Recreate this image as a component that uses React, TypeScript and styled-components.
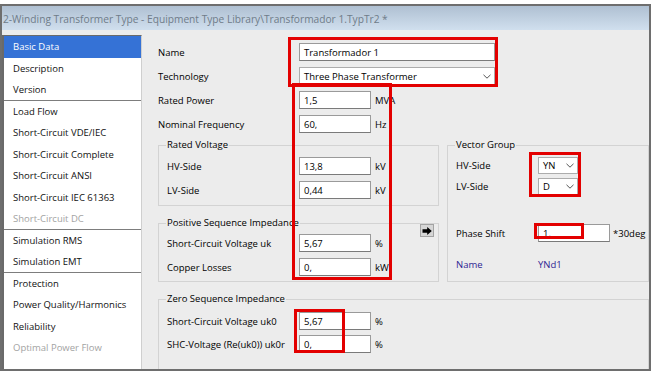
import React from 'react';
import styled, { createGlobalStyle } from 'styled-components';

const GlobalStyle = createGlobalStyle`
  html, body { margin: 0; padding: 0; background: #ffffff; }
  body {
    font-family: "Open Sans", "Noto Sans", sans-serif;
    font-size: 9.5px;
    color: #000;
  }
  * { box-sizing: border-box; }
`;

const Window = styled.div`
  margin-top: 4px;
  width: 651px;
  height: 367px;
  border: 2px solid #6e6e6e;
  display: flex;
  flex-direction: column;
  background: #ececec;
  overflow: hidden;
`;

const TitleBar = styled.div`
  height: 24px;
  flex: none;
  background: linear-gradient(#afc0d2, #d0dfee);
  color: #6f7c89;
  font-size: 10.2px;
  padding: 6px 0 0 1px;
  white-space: nowrap;
  overflow: hidden;
`;

const Body = styled.div`
  flex: 1;
  display: flex;
  min-height: 0;
`;

const Sidebar = styled.div`
  width: 140px;
  flex: none;
  margin-top: 5px;
  background: #fff;
  border-top: 1px solid #6a6a6a;
  border-left: 2px solid #6a6a6a;
  border-right: 1px solid #cfcfcf;
  display: flex;
  flex-direction: column;
`;

const NavItem = styled.div<{ $active?: boolean; $disabled?: boolean; $sep?: boolean }>`
  height: 21.5px;
  flex: none;
  display: flex;
  align-items: center;
  padding-left: 9px;
  white-space: nowrap;
  background: ${(p) => (p.$active ? '#3572d6' : 'transparent')};
  color: ${(p) => (p.$active ? '#fff' : p.$disabled ? '#a3a3a3' : '#111')};
  border-bottom: ${(p) => (p.$sep ? '1px solid #7d7d7d' : '0')};
`;

const Content = styled.div`
  flex: 1;
  position: relative;
  padding: 13px 0 0 16px;
  display: flex;
  flex-direction: column;
  overflow: hidden;
`;

const Stack = styled.div<{ $gap: number }>`
  display: flex;
  flex-direction: column;
  gap: ${(p) => p.$gap}px;
`;

const Row = styled.div<{ $h?: number; $mt?: number }>`
  display: flex;
  align-items: center;
  height: ${(p) => p.$h ?? 18}px;
  margin-top: ${(p) => p.$mt ?? 0}px;
  white-space: nowrap;
`;

const Label = styled.div<{ $w: number; $color?: string }>`
  width: ${(p) => p.$w}px;
  flex: none;
  color: ${(p) => p.$color ?? '#000'};
`;

const Value = styled.div<{ $color?: string }>`
  color: ${(p) => p.$color ?? '#000'};
`;

const Field = styled.div<{ $w: number; $h?: number }>`
  width: ${(p) => p.$w}px;
  height: ${(p) => p.$h ?? 18}px;
  flex: none;
  background: #fff;
  border: 1px solid #9a9a9a;
  border-bottom-color: #7a7a7a;
  padding-left: 4px;
  display: flex;
  align-items: center;
`;

const SelectBox = styled(Field)`
  justify-content: space-between;
  padding-right: 3px;
  border-color: #acacac;
`;

const Unit = styled.span<{ $ml?: number }>`
  margin-left: ${(p) => p.$ml ?? 4}px;
`;

const Middle = styled.div`
  display: flex;
  gap: 8px;
  margin-top: 12px;
`;

const LeftCol = styled.div`
  width: 281px;
  flex: none;
  display: flex;
  flex-direction: column;
  gap: 17px;
`;

const Group = styled.div<{ $pt: number; $pb: number; $gap: number; $mt?: number; $grow?: boolean }>`
  position: relative;
  border: 1px solid #d3d3d3;
  padding: ${(p) => p.$pt}px 0 ${(p) => p.$pb}px 8px;
  margin-top: ${(p) => p.$mt ?? 0}px;
  display: flex;
  flex-direction: column;
  gap: ${(p) => p.$gap}px;
  flex: ${(p) => (p.$grow ? 1 : 'none')};
`;

const Legend = styled.span`
  position: absolute;
  top: -8px;
  left: 7px;
  padding: 0 1px;
  line-height: 14px;
  background: #ececec;
  white-space: nowrap;
`;

const ArrowButton = styled.div`
  position: absolute;
  top: 0;
  right: 4px;
  width: 14px;
  height: 13px;
  background: #d6d6d6;
  border: 1px solid #a3a3a3;
  display: flex;
  align-items: center;
  justify-content: center;
`;

const Marker = styled.div`
  position: absolute;
  border: 3px solid #e30000;
  pointer-events: none;
`;

const Chevron = () => (
  <svg width="8" height="5" viewBox="0 0 8 5">
    <polyline points="0.5,0.8 4,4.2 7.5,0.8" fill="none" stroke="#555" strokeWidth="1" />
  </svg>
);

const navItems: { t: string; active?: boolean; disabled?: boolean; sep?: boolean }[] = [
  { t: 'Basic Data', active: true },
  { t: 'Description' },
  { t: 'Version', sep: true },
  { t: 'Load Flow' },
  { t: 'Short-Circuit VDE/IEC' },
  { t: 'Short-Circuit Complete' },
  { t: 'Short-Circuit ANSI' },
  { t: 'Short-Circuit IEC 61363' },
  { t: 'Short-Circuit DC', disabled: true, sep: true },
  { t: 'Simulation RMS' },
  { t: 'Simulation EMT', sep: true },
  { t: 'Protection' },
  { t: 'Power Quality/Harmonics' },
  { t: 'Reliability' },
  { t: 'Optimal Power Flow', disabled: true },
];

const markers = [
  { l: 146, t: 7, w: 210, h: 50 },
  { l: 150, t: 53, w: 100, h: 197 },
  { l: 152, t: 279, w: 51, h: 44 },
  { l: 387, t: 122, w: 52, h: 45 },
  { l: 392, t: 193, w: 50, h: 16 },
];

const NAME_BLUE = '#2f1f92';

export default function App() {
  return (
    <>
      <GlobalStyle />
      <Window>
        <TitleBar>2-Winding Transformer Type - Equipment Type Library\Transformador 1.TypTr2 *</TitleBar>
        <Body>
          <Sidebar>
            {navItems.map((n) => (
              <NavItem key={n.t} $active={n.active} $disabled={n.disabled} $sep={n.sep}>
                {n.t}
              </NavItem>
            ))}
          </Sidebar>
          <Content>
            <Stack $gap={6}>
              <Row>
                <Label $w={141}>Name</Label>
                <Field $w={196}>Transformador 1</Field>
              </Row>
              <Row>
                <Label $w={141}>Technology</Label>
                <SelectBox $w={196}>
                  <span>Three Phase Transformer</span>
                  <Chevron />
                </SelectBox>
              </Row>
              <Row>
                <Label $w={141}>Rated Power</Label>
                <Field $w={72}>1,5</Field>
                <Unit>MVA</Unit>
              </Row>
              <Row>
                <Label $w={141}>Nominal Frequency</Label>
                <Field $w={72}>60,</Field>
                <Unit>Hz</Unit>
              </Row>
            </Stack>

            <Middle>
              <LeftCol>
                <Group $pt={11} $pb={6} $gap={6}>
                  <Legend>Rated Voltage</Legend>
                  <Row>
                    <Label $w={132}>HV-Side</Label>
                    <Field $w={72}>13,8</Field>
                    <Unit>kV</Unit>
                  </Row>
                  <Row>
                    <Label $w={132}>LV-Side</Label>
                    <Field $w={72}>0,44</Field>
                    <Unit>kV</Unit>
                  </Row>
                </Group>
                <Group $pt={10} $pb={5} $gap={6}>
                  <Legend>Positive Sequence Impedance</Legend>
                  <ArrowButton>
                    <svg width="10" height="8" viewBox="0 0 10 8">
                      <path d="M0.5 2.3 H5.2 V0 L9.8 4 L5.2 8 V5.7 H0.5 Z" fill="#000" />
                    </svg>
                  </ArrowButton>
                  <Row>
                    <Label $w={132}>Short-Circuit Voltage uk</Label>
                    <Field $w={72}>5,67</Field>
                    <Unit>%</Unit>
                  </Row>
                  <Row>
                    <Label $w={132}>Copper Losses</Label>
                    <Field $w={72}>0,</Field>
                    <Unit>kW</Unit>
                  </Row>
                </Group>
              </LeftCol>

              <Group $pt={11} $pb={0} $gap={0} $grow>
                <Legend>Vector Group</Legend>
                <Row $h={17}>
                  <Label $w={82}>HV-Side</Label>
                  <SelectBox $w={40} $h={17}>
                    <span>YN</span>
                    <Chevron />
                  </SelectBox>
                </Row>
                <Row $h={17} $mt={4}>
                  <Label $w={82}>LV-Side</Label>
                  <SelectBox $w={40} $h={17}>
                    <span>D</span>
                    <Chevron />
                  </SelectBox>
                </Row>
                <Row $mt={29}>
                  <Label $w={82}>Phase Shift</Label>
                  <Field $w={72}>1,</Field>
                  <Unit $ml={3}>*30deg</Unit>
                </Row>
                <Row $h={14} $mt={15}>
                  <Label $w={82} $color={NAME_BLUE}>Name</Label>
                  <Value $color={NAME_BLUE}>YNd1</Value>
                </Row>
              </Group>
            </Middle>

            <Group $pt={12} $pb={20} $gap={5} $mt={17}>
              <Legend>Zero Sequence Impedance</Legend>
              <Row>
                <Label $w={132}>Short-Circuit Voltage uk0</Label>
                <Field $w={72}>5,67</Field>
                <Unit>%</Unit>
              </Row>
              <Row>
                <Label $w={132}>SHC-Voltage (Re(uk0)) uk0r</Label>
                <Field $w={72}>0,</Field>
                <Unit>%</Unit>
              </Row>
            </Group>

            {markers.map((m, i) => (
              <Marker key={i} style={{ left: m.l, top: m.t, width: m.w, height: m.h }} />
            ))}
          </Content>
        </Body>
      </Window>
    </>
  );
}
